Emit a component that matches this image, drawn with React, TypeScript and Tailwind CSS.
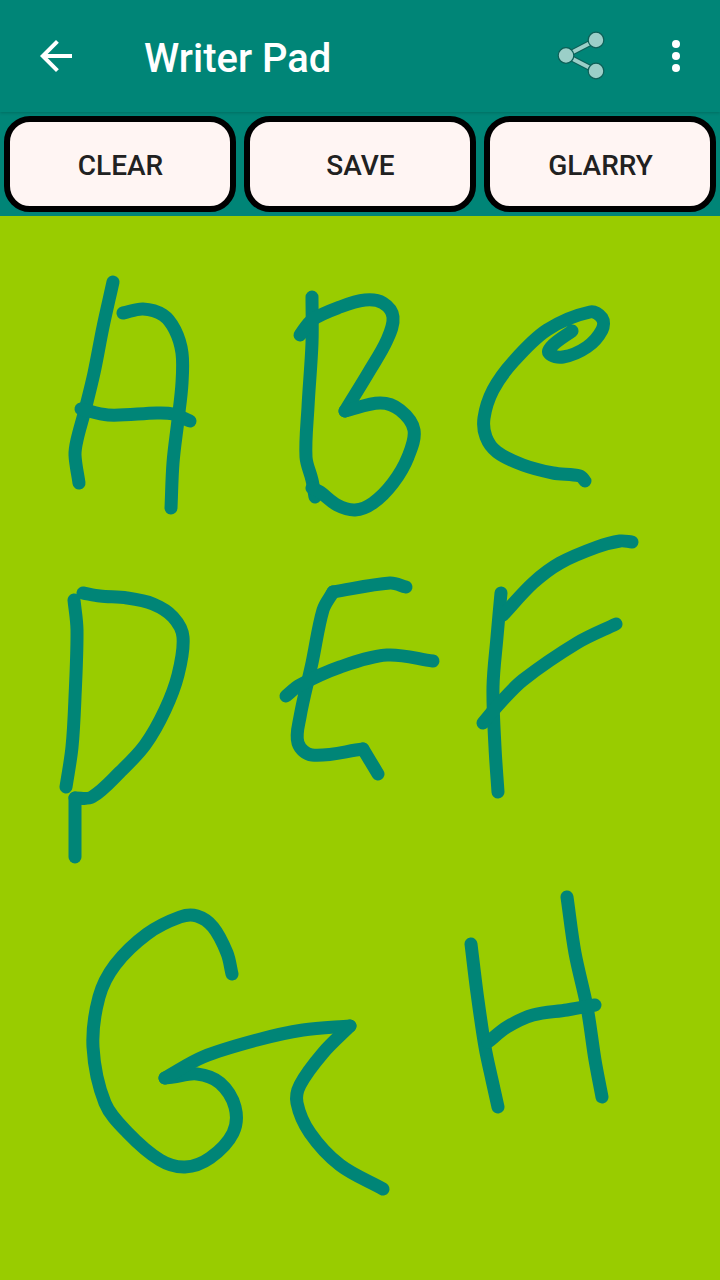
const strokes: number[][][] = [
  // A
  [[113,282],[103,327],[94,373],[85,410],[77,440],[75,455],[79,483]],
  [[123,313],[143,309],[163,315],[175,330],[182,353],[182,383],[178,420],[173,463],[171,508]],
  [[81,409],[108,415],[157,413],[173,414],[190,421]],
  // B
  [[312,297],[312,343],[308,407],[306,457],[312,480],[315,497]],
  [[300,335],[312,320],[340,307],[365,300],[383,303],[393,317],[387,340],[370,370],[345,411]],
  [[345,411],[380,403],[400,410],[414,430],[408,457],[393,483],[373,503],[355,510],[337,505],[320,492],[312,488]],
  // C
  [[585,481],[580,476],[553,473],[523,465],[497,452],[486,437],[484,418],[493,390],[513,362],[547,330],[590,312],[602,318],[602,330],[587,347],[563,357],[549,353],[553,345],[572,331]],
  // D
  [[74,600],[77,630],[75,697],[72,747],[66,787]],
  [[83,593],[100,596],[127,598],[153,604],[173,617],[183,637],[178,675],[165,710],[145,745],[120,772],[92,797],[75,798]],
  [[75,798],[75,857]],
  // E
  [[406,587],[390,583],[333,592]],
  [[333,592],[323,610],[312,663],[300,717],[298,743],[312,755],[363,749]],
  [[363,749],[378,774]],
  [[286,696],[300,685],[340,667],[387,655],[433,661]],
  // F
  [[501,593],[497,637],[493,687],[495,747],[498,792]],
  [[632,542],[620,541],[597,547],[560,563],[533,583],[503,615]],
  [[616,624],[577,643],[523,680],[500,703],[483,723]],
  // G
  [[232,974],[227,953],[213,927],[197,916],[180,917],[147,934],[115,965],[99,997],[93,1047],[105,1103],[127,1132],[160,1160],[185,1167],[210,1158],[233,1133],[235,1107],[220,1083],[197,1074],[173,1077],[165,1078]],
  [[165,1078],[203,1057],[257,1040],[303,1030],[350,1026]],
  [[350,1026],[323,1053],[300,1085],[297,1103],[310,1133],[340,1165],[383,1189]],
  // H
  [[471,944],[477,993],[485,1047],[492,1080],[498,1107]],
  [[567,897],[575,953],[587,1007],[595,1060],[602,1097]],
  [[488,1042],[507,1027],[533,1015],[567,1010],[595,1005]],
];

function smooth(p: number[][]): string {
  const tangent = (i: number) => {
    const a = p[Math.max(i - 1, 0)];
    const c = p[Math.min(i + 1, p.length - 1)];
    const dx = c[0] - a[0];
    const dy = c[1] - a[1];
    const l = Math.hypot(dx, dy) || 1;
    return [dx / l, dy / l];
  };
  let d = `M${p[0][0]} ${p[0][1]}`;
  for (let i = 0; i < p.length - 1; i++) {
    const b = p[i];
    const c = p[i + 1];
    const h = Math.hypot(c[0] - b[0], c[1] - b[1]) / 3;
    const t1 = tangent(i);
    const t2 = tangent(i + 1);
    d += `C${(b[0] + t1[0] * h).toFixed(1)} ${(b[1] + t1[1] * h).toFixed(1)} ${(c[0] - t2[0] * h).toFixed(1)} ${(c[1] - t2[1] * h).toFixed(1)} ${c[0]} ${c[1]}`;
  }
  return d;
}

function ActionButton({ label }: { label: string }) {
  return (
    <button className="flex-1 h-[96px] rounded-[26px] border-[6px] border-black bg-[#fff5f3] text-[#212121] text-[28px] font-medium flex items-center justify-center pt-[4px] pl-[1px]">
      {label}
    </button>
  );
}

export default function App() {
  return (
    <div className="w-[720px] h-[1280px] flex flex-col bg-[#99cc00] overflow-hidden font-['Roboto',sans-serif]">
      <header className="h-[112px] shrink-0 bg-[#008577] flex items-center relative z-10 shadow-[0_1px_3px_rgba(0,0,0,0.18)]">
        <svg className="ml-[32px] w-[48px] h-[48px]" viewBox="0 0 24 24" fill="#ffffff">
          <path d="M20 11H7.83l5.59-5.59L12 4l-8 8 8 8 1.41-1.41L7.83 13H20v-2z" />
        </svg>
        <h1 className="ml-[64px] pt-[6px] text-[40px] font-medium text-white leading-none">Writer Pad</h1>
        <svg className="ml-auto w-[56px] h-[56px]" viewBox="0 0 56 56">
          <path d="M41 12L11 27.5L41 43" fill="none" stroke="#0d5f57" strokeWidth="6" />
          <path d="M41 12L11 27.5L41 43" fill="none" stroke="#9bcfc8" strokeWidth="4" />
          <circle cx="41" cy="12" r="7.8" fill="#9bcfc8" stroke="#0d5f57" strokeWidth="1.2" />
          <circle cx="11" cy="27.5" r="7.8" fill="#9bcfc8" stroke="#0d5f57" strokeWidth="1.2" />
          <circle cx="41" cy="43" r="7.8" fill="#9bcfc8" stroke="#0d5f57" strokeWidth="1.2" />
        </svg>
        <div className="ml-[61px] mr-[40px] flex flex-col gap-[4px]">
          <span className="w-[8px] h-[8px] rounded-full bg-white" />
          <span className="w-[8px] h-[8px] rounded-full bg-white" />
          <span className="w-[8px] h-[8px] rounded-full bg-white" />
        </div>
      </header>
      <div className="h-[104px] shrink-0 bg-[#008577] flex items-center gap-[8px] px-[4px]">
        <ActionButton label="CLEAR" />
        <ActionButton label="SAVE" />
        <ActionButton label="GLARRY" />
      </div>
      <svg className="w-[720px] h-[1064px] shrink-0" viewBox="0 216 720 1064" fill="none" stroke="#008577" strokeWidth="13" strokeLinecap="round" strokeLinejoin="round">
        {strokes.map((s, i) => (
          <path key={i} d={smooth(s)} />
        ))}
      </svg>
    </div>
  );
}
